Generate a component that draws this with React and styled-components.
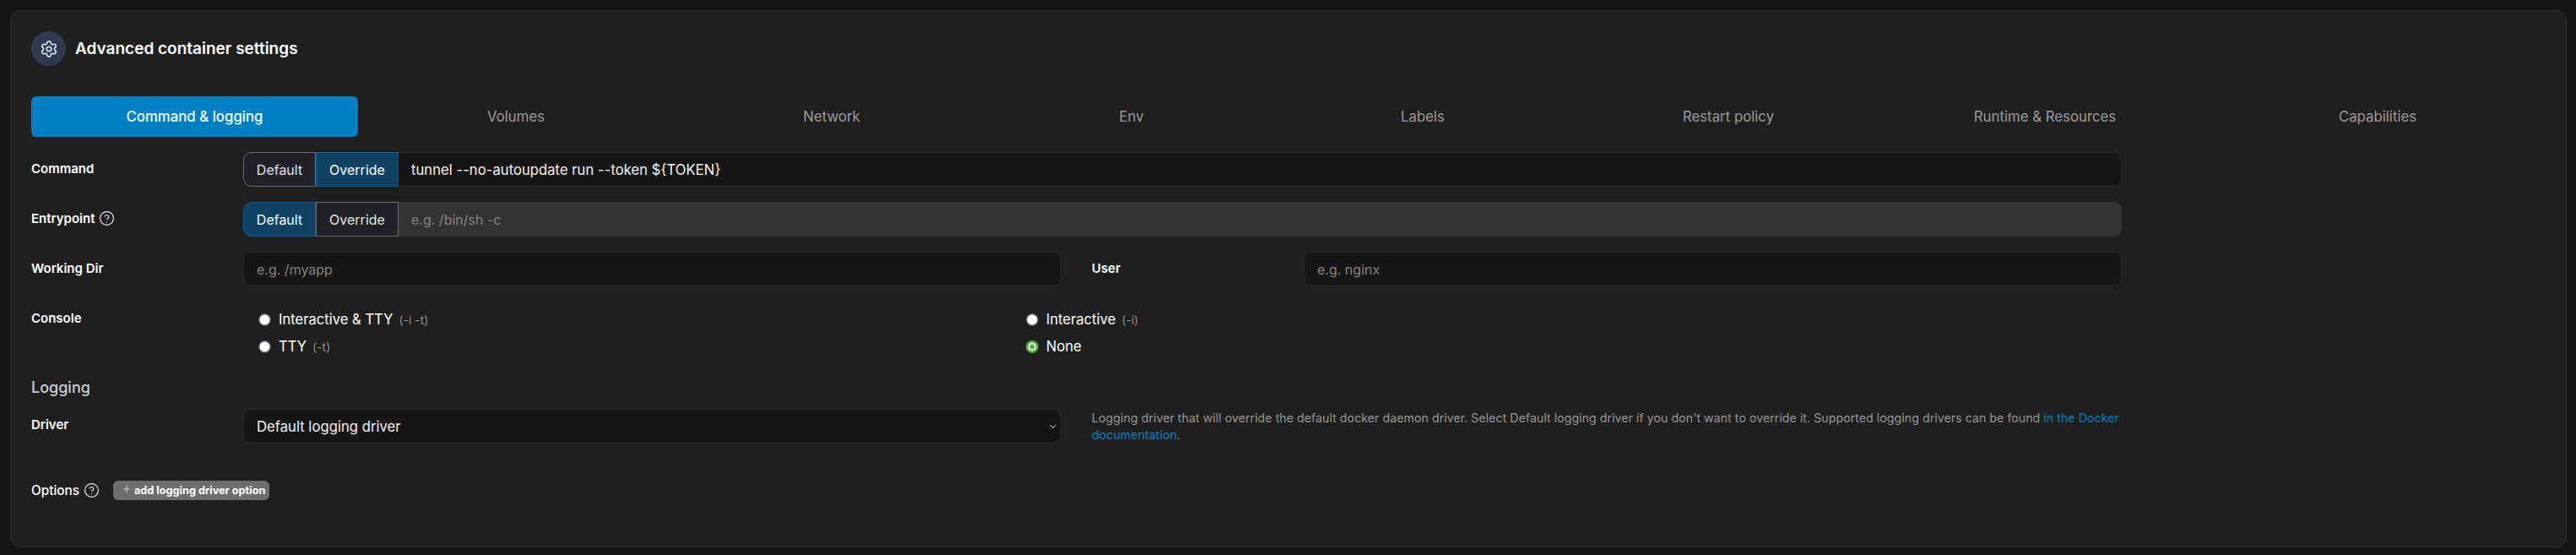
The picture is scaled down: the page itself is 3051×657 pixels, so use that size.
import React from 'react';
import styled, { createGlobalStyle } from 'styled-components';
import { Settings, CircleHelp, Plus, ChevronDown } from 'lucide-react';

const Global = createGlobalStyle`
  html, body { margin: 0; padding: 0; background: #161616; }
  * { box-sizing: border-box; }
  body { font-family: Inter, "Noto Sans", sans-serif; color: #fff; font-size: 16px; }
`;

const Page = styled.div`
  padding: 12px 11px 9px 12px;
  height: 657px;
  overflow: hidden;
`;
const Panel = styled.section`
  height: 636px;
  background: #1f1f1f;
  border: 1px solid #2f2f2f;
  border-radius: 12px;
  padding: 24px 24px 0;
`;
const Header = styled.header`
  display: flex;
  align-items: center;
  gap: 11px;
  height: 41px;
`;
const IconCircle = styled.span`
  width: 41px;
  height: 41px;
  border-radius: 50%;
  background: #2d3a50;
  color: #dce6f5;
  display: flex;
  align-items: center;
  justify-content: center;
`;
const Title = styled.h2`
  margin: 0;
  font-size: 19px;
  font-weight: 600;
  color: #fff;
`;
const TabBar = styled.nav`
  display: grid;
  grid-template-columns: 387px 374px 374px 336px 354px 370px 380px 408px;
  margin-top: 36px;
  height: 48px;
`;
const Tab = styled.div`
  display: flex;
  align-items: center;
  justify-content: center;
  font-size: 16.8px;
  font-weight: ${p => (p.$active ? 500 : 400)};
  color: ${p => (p.$active ? '#fff' : '#9b9b9b')};
  background: ${p => (p.$active ? '#0081c5' : 'transparent')};
  border-radius: 6px;
`;
const Form = styled.div`
  width: 2476px;
  margin-top: 18px;
`;
const Row = styled.div`
  display: flex;
  min-height: 41px;
  margin-bottom: 18px;
`;
const Half = styled.div`
  display: flex;
  flex: 0 0 ${p => p.$width || '1220px'};
  margin-right: ${p => p.$gap || 0};
`;
const Label = styled.label`
  flex: 0 0 251px;
  display: flex;
  align-items: center;
  gap: 5px;
  height: 38px;
  font-size: 15px;
  font-weight: 600;
  color: #fff;
`;
const Help = styled.span`
  display: inline-flex;
  color: #e6e6e6;
`;
const Field = styled.div`
  flex: 1;
  display: flex;
  height: 41px;
`;
const ToggleBtn = styled.div`
  flex: 0 0 ${p => p.$w};
  display: flex;
  align-items: center;
  justify-content: center;
  font-size: 16px;
  font-weight: 400;
  color: ${p => (p.$on ? '#fff' : '#e4e4e4')};
  background: ${p => (p.$on ? '#0f4265' : '#202227')};
  border: 1px solid ${p => (p.$on ? '#0a5f92' : '#6f6b69')};
  border-radius: ${p => (p.$first ? '10px 0 0 10px' : '0')};
`;
const TextBox = styled.div`
  flex: 1;
  display: flex;
  align-items: center;
  padding: 0 15px;
  font-size: ${p => (p.$ph ? '16px' : '16.7px')};
  color: ${p => (p.$ph ? '#828282' : '#f2f2f2')};
  background: ${p => (p.$disabled ? '#333333' : '#161616')};
  border: 1px solid ${p => (p.$disabled ? '#333333' : '#2c2c2c')};
  border-left-width: ${p => (p.$attached ? 0 : '1px')};
  border-radius: ${p => (p.$attached ? '0 9px 9px 0' : '9px')};
`;
const SelectBox = styled(TextBox)`
  justify-content: space-between;
  padding-right: 3px;
`;
const RadioGrid = styled.div`
  flex: 1;
  display: grid;
  grid-template-columns: 909px 1fr;
  grid-auto-rows: 32px;
  padding: 0 0 0 18px;
  margin-top: -1px;
`;
const ConsoleRow = styled.div`
  display: flex;
  height: 62px;
  margin-top: 24px;
`;
const ConsoleLabel = styled(Label)`
  height: 26px;
`;
const RadioItem = styled.div`
  display: flex;
  align-items: center;
  gap: 9px;
  font-size: 16.6px;
  color: #fff;
`;
const Dot = styled.span`
  flex: 0 0 15px;
  width: 15px;
  height: 15px;
  border-radius: 50%;
  background: ${p =>
    p.$on
      ? 'radial-gradient(circle, #4fae3b 0 2.6px, #eaf6e5 3.2px 4.6px, #4fae3b 5.2px)'
      : 'radial-gradient(circle, #fff 0 5.4px, #6a6678 6.4px, #4d4a5a 7.5px)'};
`;
const Flag = styled.small`
  font-size: 14px;
  color: #8e8e8e;
  margin-left: -2px;
`;
const SectionTitle = styled.h3`
  margin: 22px 0 13px;
  height: 24px;
  line-height: 24px;
  font-size: 18px;
  font-weight: 500;
  color: #c9ccd3;
`;
const DriverLabel = styled(Label)`
  height: 37px;
`;
const HelpText = styled.p`
  margin: 0;
  padding: 1px 0 0 36px;
  font-size: 14.25px;
  line-height: 20px;
  color: #959595;
`;
const DocLink = styled.a`
  color: #0081c5;
`;
const OptionsRow = styled.div`
  display: flex;
  align-items: center;
  margin-top: 44px;
  height: 23px;
`;
const OptionsLabel = styled(Label)`
  flex: 0 0 97px;
  height: 23px;
  font-size: 15.3px;
  font-weight: 500;
`;
const AddBtn = styled.span`
  display: inline-flex;
  align-items: center;
  gap: 3px;
  height: 23px;
  width: 185px;
  padding-left: 10px;
  background: #6e6e6e;
  border-radius: 6px;
  color: #fff;
  font-size: 12.7px;
  font-weight: 700;
`;
const PlusMark = styled.span`
  display: inline-flex;
  color: #f0f0f0;
  margin-top: -4px;
`;

const tabs = ['Command & logging', 'Volumes', 'Network', 'Env', 'Labels', 'Restart policy', 'Runtime & Resources', 'Capabilities'];

export default function App() {
  return (
    <Page>
      <Global />
      <Panel>
        <Header>
          <IconCircle><Settings size={22} strokeWidth={1.75} /></IconCircle>
          <Title>Advanced container settings</Title>
        </Header>
        <TabBar>
          {tabs.map((t, i) => <Tab key={t} $active={i === 0}>{t}</Tab>)}
        </TabBar>
        <Form>
          <Row>
            <Label>Command</Label>
            <Field>
              <ToggleBtn $w="86px" $first>Default</ToggleBtn>
              <ToggleBtn $w="98px" $on>Override</ToggleBtn>
              <TextBox $attached>tunnel --no-autoupdate run --token {'${TOKEN}'}</TextBox>
            </Field>
          </Row>
          <Row>
            <Label>Entrypoint <Help><CircleHelp size={19} strokeWidth={1.5} /></Help></Label>
            <Field>
              <ToggleBtn $w="86px" $first $on>Default</ToggleBtn>
              <ToggleBtn $w="98px">Override</ToggleBtn>
              <TextBox $attached $disabled $ph>e.g. /bin/sh -c</TextBox>
            </Field>
          </Row>
          <Row>
            <Half $width="1220px" $gap="36px">
              <Label>Working Dir</Label>
              <Field><TextBox $ph>e.g. /myapp</TextBox></Field>
            </Half>
            <Half $width="1220px">
              <Label>User</Label>
              <Field><TextBox $ph>e.g. nginx</TextBox></Field>
            </Half>
          </Row>
          <ConsoleRow>
            <ConsoleLabel>Console</ConsoleLabel>
            <RadioGrid>
              <RadioItem><Dot />Interactive &amp; TTY <Flag>(-i -t)</Flag></RadioItem>
              <RadioItem><Dot />Interactive <Flag>(-i)</Flag></RadioItem>
              <RadioItem><Dot />TTY <Flag>(-t)</Flag></RadioItem>
              <RadioItem><Dot $on />None</RadioItem>
            </RadioGrid>
          </ConsoleRow>
          <SectionTitle>Logging</SectionTitle>
          <Row>
            <Half $width="1220px">
              <DriverLabel>Driver</DriverLabel>
              <Field>
                <SelectBox>Default logging driver<ChevronDown size={12} strokeWidth={2} /></SelectBox>
              </Field>
            </Half>
            <HelpText>
              Logging driver that will override the default docker daemon driver. Select Default logging driver if you don't want to override it. Supported logging drivers can be found <DocLink>in the Docker documentation</DocLink>.
            </HelpText>
          </Row>
          <OptionsRow>
            <OptionsLabel>Options <Help><CircleHelp size={19} strokeWidth={1.5} /></Help></OptionsLabel>
            <AddBtn><PlusMark><Plus size={12} strokeWidth={1.5} /></PlusMark>add logging driver option</AddBtn>
          </OptionsRow>
        </Form>
      </Panel>
    </Page>
  );
}
